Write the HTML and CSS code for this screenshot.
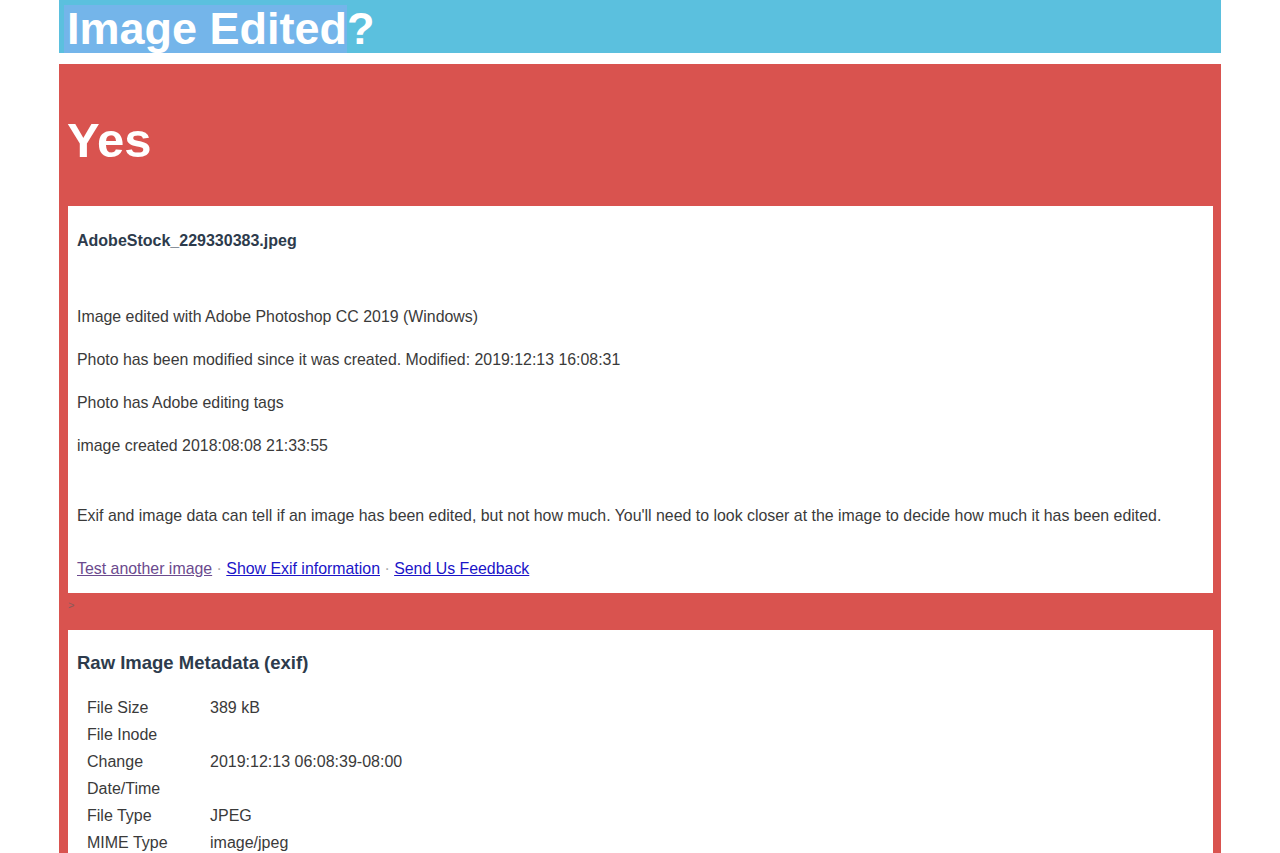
FILE: index.html
```html
<!DOCTYPE html>
<html lang="en">

<head>
    <meta charset="UTF-8">
    <meta name="viewport" content="width=device-width, initial-scale=1.0">
    <title>Image Edited?</title>
    <link rel="stylesheet" href="styles.css">
</head>

<body>
    <div class="page">
        <div class="title-bar">
            <h1><span class="selected">Image Edited</span>?</h1>
        </div>

        <div class="result">
            <h2 class="verdict">Yes</h2>

            <div class="card summary">
                <h3 class="file-name">AdobeStock_229330383.jpeg</h3>
                <div class="findings">
                    <p>Image edited with Adobe Photoshop CC 2019 (Windows)</p>
                    <p>Photo has been modified since it was created. Modified: 2019:12:13 16:08:31</p>
                    <p>Photo has Adobe editing tags</p>
                    <p>image created 2018:08:08 21:33:55</p>
                </div>
                <p class="note">Exif and image data can tell if an image has been edited, but not how much. You'll need to look closer at the image to decide how much it has been edited.</p>
                <div class="links">
                    <a href="#" class="visited">Test another image</a>
                    <span class="dot">&middot;</span>
                    <a href="#">Show Exif information</a>
                    <span class="dot">&middot;</span>
                    <a href="#">Send Us Feedback</a>
                </div>
            </div>

            <div class="stray">&gt;</div>

            <div class="card meta">
                <h3 class="meta-title">Raw Image Metadata (exif)</h3>
                <table class="meta-table">
                    <tr><td class="key">File Size</td><td>389 kB</td></tr>
                    <tr><td class="key">File Inode</td><td></td></tr>
                    <tr><td class="key">Change Date/Time</td><td>2019:12:13 06:08:39-08:00</td></tr>
                    <tr><td class="key">File Type</td><td>JPEG</td></tr>
                    <tr><td class="key">MIME Type</td><td>image/jpeg</td></tr>
                </table>
            </div>
        </div>
    </div>
</body>

</html>
```

FILE: styles.css
```css
* {
    margin: 0;
    padding: 0;
    box-sizing: border-box;
}

body {
    font-family: "Liberation Sans", Arial, sans-serif;
    background: #fff;
    color: #3a3a3a;
    overflow: hidden;
}

.page {
    width: 1162px;
    margin: 0 auto;
}

.title-bar {
    height: 53px;
    background: #5bc0de;
    margin-bottom: 11px;
    padding-left: 5px;
    padding-top: 5px;
}

.title-bar h1 {
    font-size: 45px;
    line-height: 48px;
    color: #fff;
    font-weight: bold;
}

.selected {
    background: #74b5ea;
    display: inline-block;
    padding-left: 3px;
}

.result {
    background: #d9534f;
    padding: 0 8px 0 9px;
    min-height: 789px;
}

.verdict {
    color: #fff;
    font-size: 49px;
    line-height: 56px;
    height: 142px;
    padding-top: 48px;
    margin-left: -1px;
}

.card {
    background: #fff;
    padding: 0 9px;
}

.summary {
    padding-top: 25px;
    padding-bottom: 14px;
}

.file-name {
    font-size: 16px;
    line-height: 20px;
    color: #2d3b4c;
}

.findings {
    margin-top: 56px;
}

.findings p,
.note {
    font-size: 15.9px;
    line-height: 20px;
    margin-bottom: 23px;
}

.findings p:last-child {
    margin-bottom: 0;
}

.note {
    margin-top: 50px;
    margin-bottom: 33px;
}

.links {
    font-size: 15.9px;
    line-height: 20px;
}

.links a {
    color: #1a14c8;
}

.links a.visited {
    color: #6b4a8e;
}

.dot {
    color: #aaa;
}

.stray {
    height: 37px;
    font-size: 11px;
    color: #8a5a5a;
    padding-top: 6px;
}

.meta {
    padding-top: 22px;
    min-height: 224px;
}

.meta-title {
    font-size: 18.5px;
    line-height: 22px;
    color: #2d3b4c;
    margin-bottom: 20px;
}

.meta-table {
    border-collapse: collapse;
    margin-left: 6px;
    font-size: 16px;
}

.meta-table td {
    padding: 0 4px;
    line-height: 27px;
    vertical-align: top;
}

.meta-table td.key {
    width: 123px;
    padding-right: 8px;
}
```
